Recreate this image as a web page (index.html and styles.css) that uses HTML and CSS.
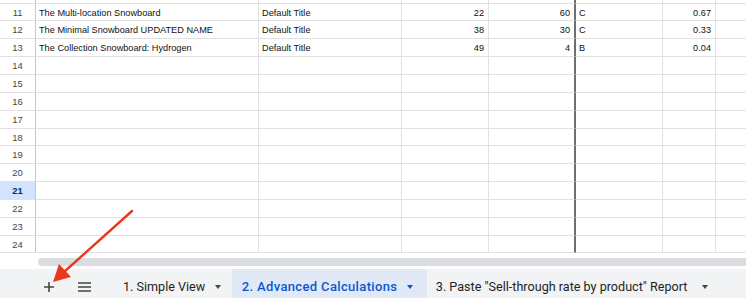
FILE: index.html
```html
<!DOCTYPE html>
<html>
<head>
<meta charset="utf-8">
<link rel="stylesheet" href="styles.css">
</head>
<body>
<div class="app">
  <div class="sheet">
    <div class="row partial"><div class="c h"></div><div class="c"></div><div class="c"></div><div class="c"></div><div class="c frz"></div><div class="c"></div><div class="c"></div><div class="c last"></div></div>
    <div class="row"><div class="c h">11</div><div class="c">The Multi-location Snowboard</div><div class="c">Default Title</div><div class="c num">22</div><div class="c num frz">60</div><div class="c">C</div><div class="c num">0.67</div><div class="c last"></div></div>
    <div class="row"><div class="c h">12</div><div class="c">The Minimal Snowboard UPDATED NAME</div><div class="c">Default Title</div><div class="c num">38</div><div class="c num frz">30</div><div class="c">C</div><div class="c num">0.33</div><div class="c last"></div></div>
    <div class="row"><div class="c h">13</div><div class="c">The Collection Snowboard: Hydrogen</div><div class="c">Default Title</div><div class="c num">49</div><div class="c num frz">4</div><div class="c">B</div><div class="c num">0.04</div><div class="c last"></div></div>
    <div class="row"><div class="c h">14</div><div class="c"></div><div class="c"></div><div class="c"></div><div class="c frz"></div><div class="c"></div><div class="c"></div><div class="c last"></div></div>
    <div class="row"><div class="c h">15</div><div class="c"></div><div class="c"></div><div class="c"></div><div class="c frz"></div><div class="c"></div><div class="c"></div><div class="c last"></div></div>
    <div class="row"><div class="c h">16</div><div class="c"></div><div class="c"></div><div class="c"></div><div class="c frz"></div><div class="c"></div><div class="c"></div><div class="c last"></div></div>
    <div class="row"><div class="c h">17</div><div class="c"></div><div class="c"></div><div class="c"></div><div class="c frz"></div><div class="c"></div><div class="c"></div><div class="c last"></div></div>
    <div class="row"><div class="c h">18</div><div class="c"></div><div class="c"></div><div class="c"></div><div class="c frz"></div><div class="c"></div><div class="c"></div><div class="c last"></div></div>
    <div class="row"><div class="c h">19</div><div class="c"></div><div class="c"></div><div class="c"></div><div class="c frz"></div><div class="c"></div><div class="c"></div><div class="c last"></div></div>
    <div class="row"><div class="c h">20</div><div class="c"></div><div class="c"></div><div class="c"></div><div class="c frz"></div><div class="c"></div><div class="c"></div><div class="c last"></div></div>
    <div class="row"><div class="c h sel">21</div><div class="c"></div><div class="c"></div><div class="c"></div><div class="c frz"></div><div class="c"></div><div class="c"></div><div class="c last"></div></div>
    <div class="row"><div class="c h">22</div><div class="c"></div><div class="c"></div><div class="c"></div><div class="c frz"></div><div class="c"></div><div class="c"></div><div class="c last"></div></div>
    <div class="row"><div class="c h">23</div><div class="c"></div><div class="c"></div><div class="c"></div><div class="c frz"></div><div class="c"></div><div class="c"></div><div class="c last"></div></div>
    <div class="row"><div class="c h">24</div><div class="c"></div><div class="c"></div><div class="c"></div><div class="c frz"></div><div class="c"></div><div class="c"></div><div class="c last"></div></div>
  </div>
  <div class="hscroll"><div class="thumb"></div></div>
  <div class="tabbar">
    <div class="tool plus">
      <svg width="12" height="12" viewBox="0 0 12 12"><path d="M6 1v10M1 6h10" stroke="#444746" stroke-width="1.6" fill="none"/></svg>
    </div>
    <div class="tool menu">
      <svg width="13" height="10" viewBox="0 0 13 10"><path d="M0 1h13M0 5h13M0 9h13" stroke="#444746" stroke-width="1.5" fill="none"/></svg>
    </div>
    <div class="tab"><span>1. Simple View</span><i class="caret"></i></div>
    <div class="tab active"><span>2. Advanced Calculations</span><i class="caret"></i></div>
    <div class="tab"><span>3. Paste "Sell-through rate by product" Report</span><i class="caret"></i></div>
  </div>
  <svg class="arrow" width="746" height="298" viewBox="0 0 746 298">
    <path d="M132 211 L64 272" stroke="#e8391f" stroke-width="2.4" stroke-linecap="round" fill="none"/>
    <path d="M53 282 L59 264 L71 277 Z" fill="#e8391f"/>
  </svg>
</div>
</body>
</html>
```

FILE: styles.css
```css
* { box-sizing: border-box; }
html, body { margin: 0; padding: 0; background: #fff; }
.app { position: relative; width: 746px; height: 298px; overflow: hidden; }
.sheet { display: flex; flex-direction: column; }
.row {
  display: grid;
  grid-template-columns: 36px 223px 143px 87px 87px 87px 53px 30px;
  height: 17.85px;
  flex: none;
}
.row.partial { height: 3.6px; }
.c {
  border-right: 1px solid #e1e1e1;
  border-bottom: 1px solid #e1e1e1;
  font-family: "Liberation Sans", Arial, sans-serif;
  font-size: 9.2px;
  color: #111;
  line-height: 17px;
  padding: 1px 3px 0;
  white-space: nowrap;
  overflow: hidden;
}
.c.num { text-align: right; padding-right: 4px; }
.c.frz { border-right: 2px solid #6f6f6f; }
.c.h {
  text-align: center;
  color: #444;
  font-size: 9.4px;
  border-right: 1px solid #c7c7c7;
  padding: 0;
}
.c.h.sel { background: #d3e3fd; color: #0b2a63; font-weight: bold; }
.c.last { border-right: none; }
.hscroll {
  height: 15.5px;
  padding: 5px 0 0 38px;
  background: #fff;
}
.thumb { height: 8px; background: #dadce0; border-radius: 4px 0 0 4px; }
.tabbar {
  height: 36px;
  background: #f1f3f4;
  display: flex;
  align-items: stretch;
  padding-left: 36px;
  font-family: Roboto, "Liberation Sans", sans-serif;
}
.tool { display: flex; align-items: center; justify-content: center; width: 26px; }
.plus { margin-right: 9px; }
.menu { margin-right: 16px; }
.tab {
  display: flex;
  align-items: center;
  padding: 0 11px 0 10px;
  font-size: 12.6px;
  color: #1f1f1f;
  white-space: nowrap;
}
.tab span { margin-right: 9.5px; }
.tab.active {
  background: #e1e9f7;
  color: #0b57d0;
  font-weight: 500;
  font-size: 13px;
  letter-spacing: 0.35px;
  padding-right: 14px;
}
.tab:last-child { padding-left: 9px; }
.tab:last-child span { margin-right: 15px; }
.caret {
  width: 0; height: 0;
  border-left: 3.5px solid transparent;
  border-right: 3.5px solid transparent;
  border-top: 4px solid #444746;
}
.tab.active .caret { border-top-color: #0b57d0; }
.arrow { position: absolute; left: 0; top: 0; pointer-events: none; }
```
